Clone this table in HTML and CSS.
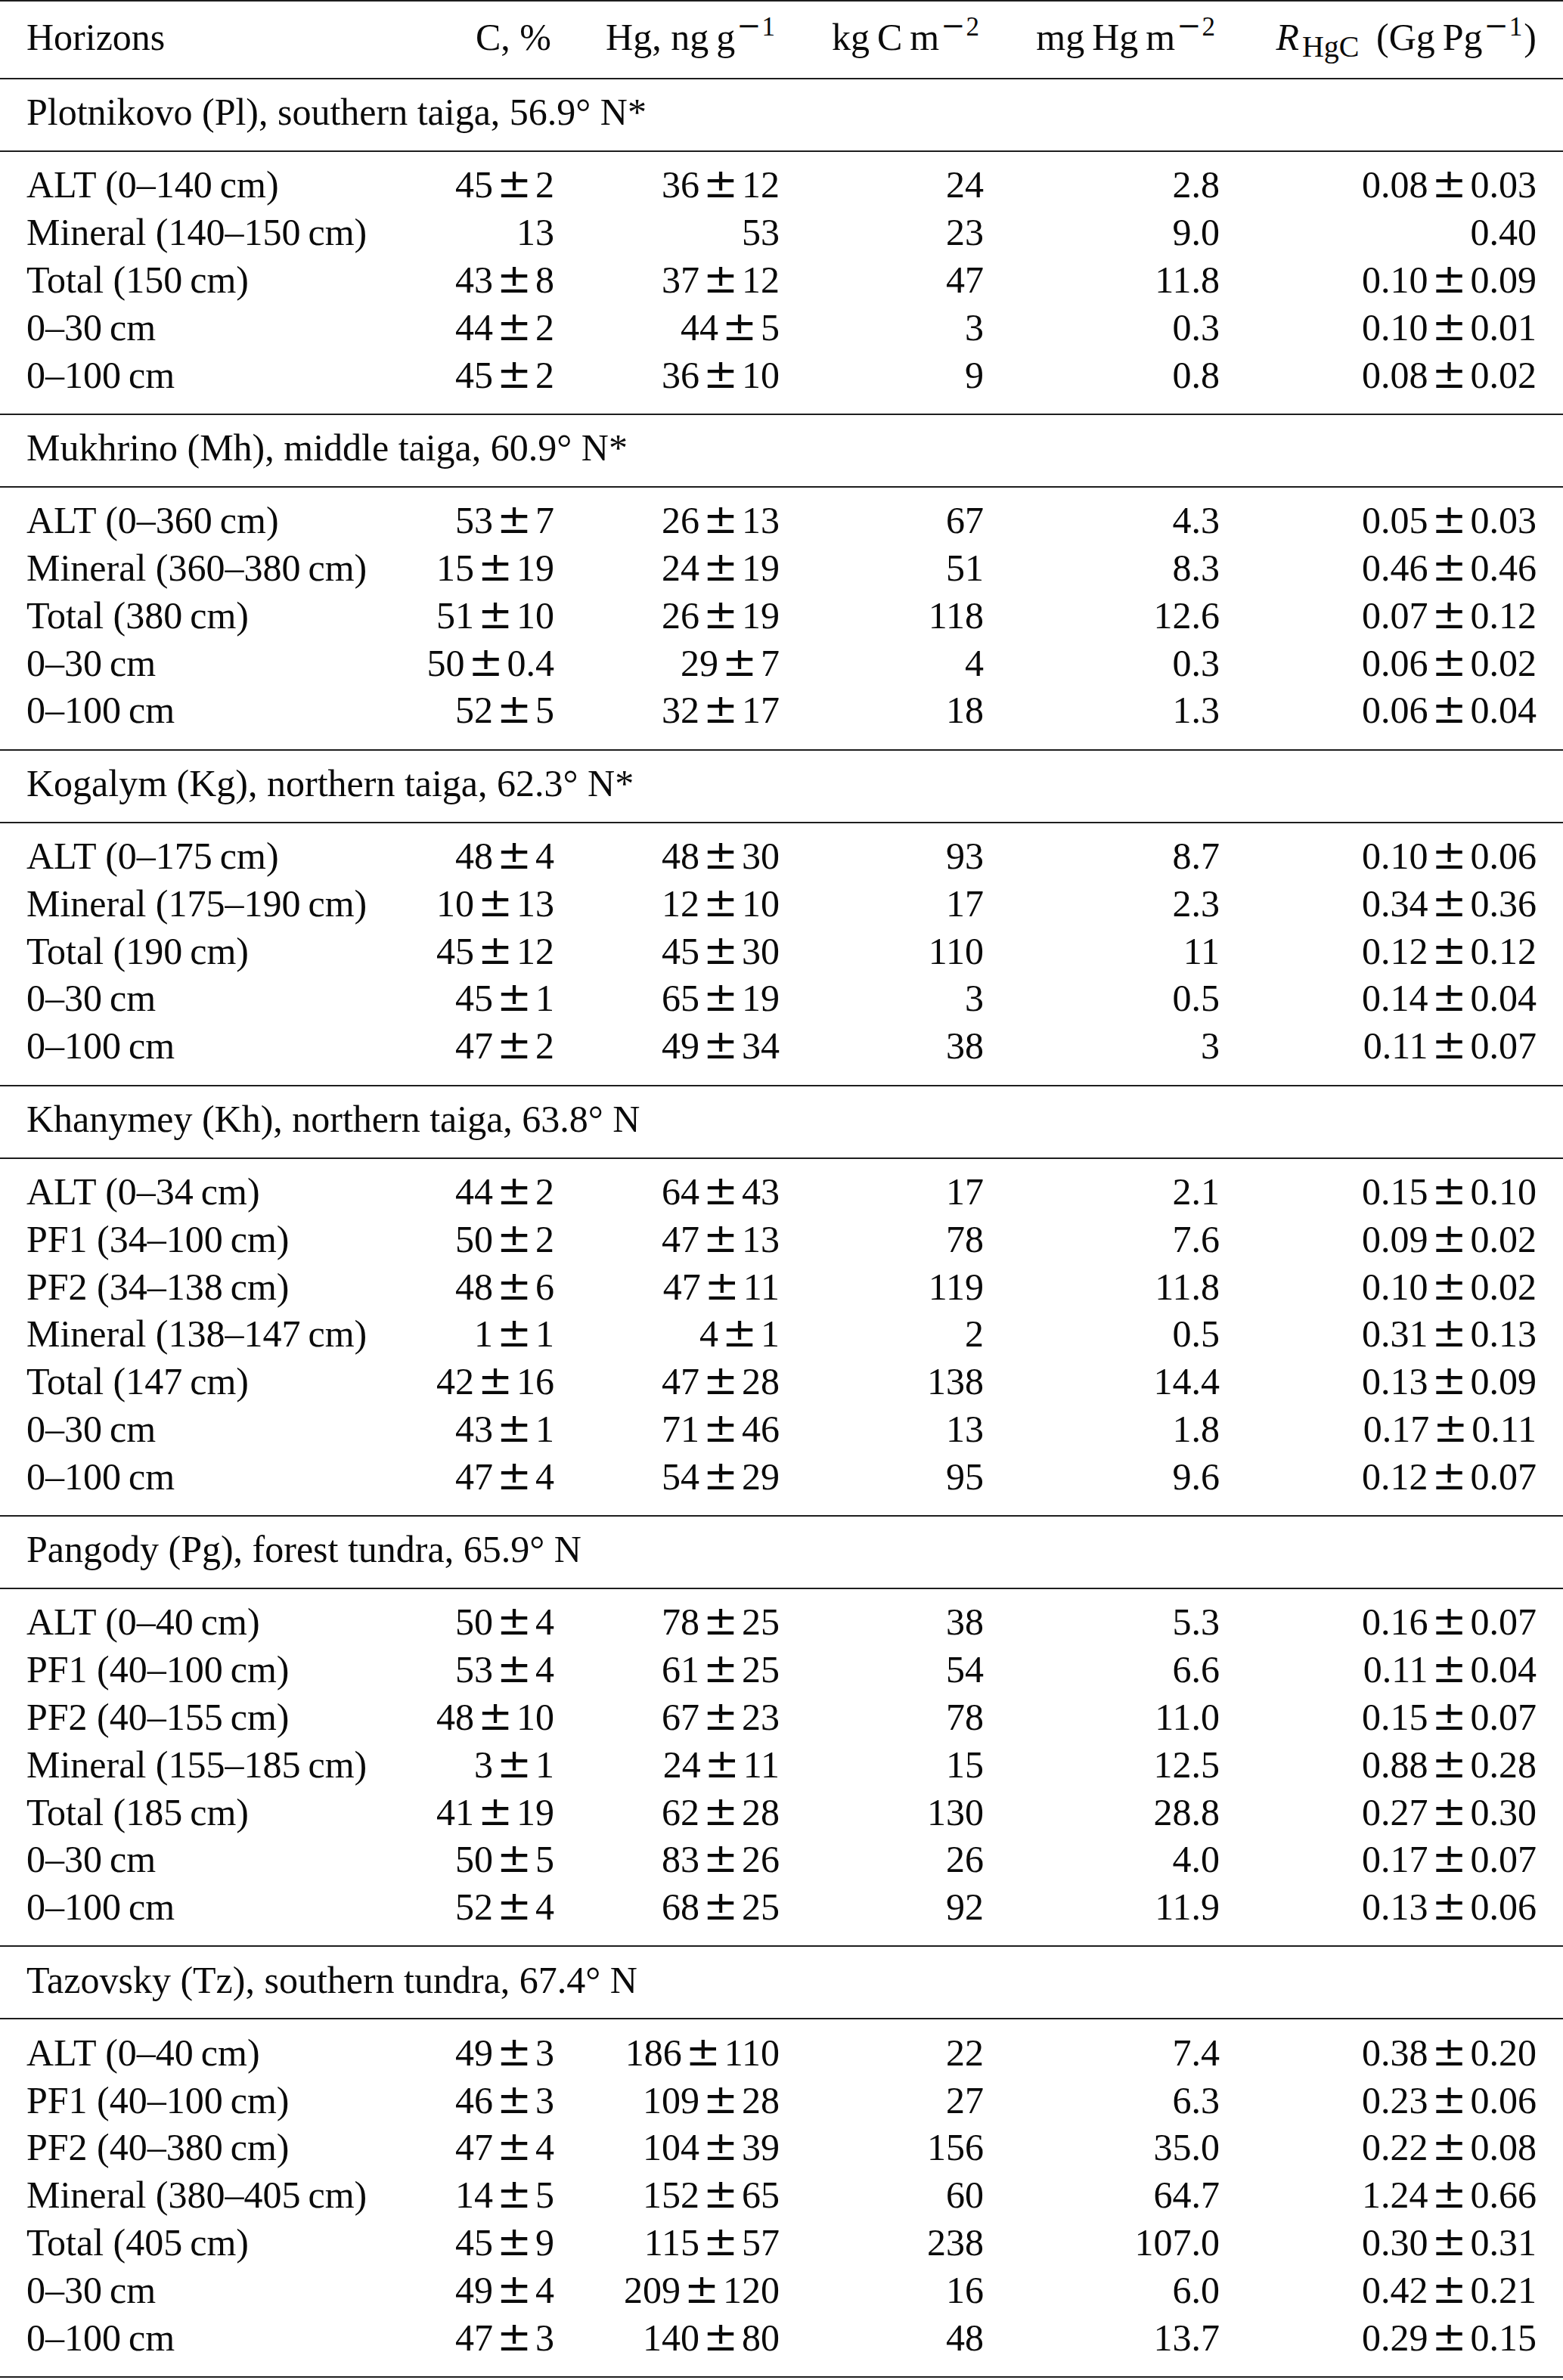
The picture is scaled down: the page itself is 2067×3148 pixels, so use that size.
FILE: index.html
```html
<!DOCTYPE html>
<html lang="en">
<head>
<meta charset="utf-8">
<title>Carbon and mercury stocks by horizon</title>
<link rel="stylesheet" href="styles.css">
</head>
<body>
<div class="table">
  <div class="cols head">
    <span class="l">Horizons</span>
    <span>C, %</span>
    <span>Hg, ng&#8201;g<sup><span class="mn">−</span>1</sup></span>
    <span>kg&#8201;C&#8201;m<sup><span class="mn">−</span>2</sup></span>
    <span>mg&#8201;Hg&#8201;m<sup><span class="mn">−</span>2</sup></span>
    <span><i>R</i><sub>HgC</sub> (Gg&#8201;Pg<sup><span class="mn">−</span>1</sup>)</span>
  </div>

  <div class="site">Plotnikovo (Pl), southern taiga, 56.9° N*</div>
  <div class="cols group">
    <span class="l">ALT (0–140&#8201;cm)</span><span>45<b class="pm">±</b>2</span><span>36<b class="pm">±</b>12</span><span>24</span><span>2.8</span><span>0.08<b class="pm">±</b>0.03</span>
    <span class="l">Mineral (140–150&#8201;cm)</span><span>13</span><span>53</span><span>23</span><span>9.0</span><span>0.40</span>
    <span class="l">Total (150&#8201;cm)</span><span>43<b class="pm">±</b>8</span><span>37<b class="pm">±</b>12</span><span>47</span><span>11.8</span><span>0.10<b class="pm">±</b>0.09</span>
    <span class="l">0–30&#8201;cm</span><span>44<b class="pm">±</b>2</span><span>44<b class="pm">±</b>5</span><span>3</span><span>0.3</span><span>0.10<b class="pm">±</b>0.01</span>
    <span class="l">0–100&#8201;cm</span><span>45<b class="pm">±</b>2</span><span>36<b class="pm">±</b>10</span><span>9</span><span>0.8</span><span>0.08<b class="pm">±</b>0.02</span>
  </div>

  <div class="site">Mukhrino (Mh), middle taiga, 60.9° N*</div>
  <div class="cols group">
    <span class="l">ALT (0–360&#8201;cm)</span><span>53<b class="pm">±</b>7</span><span>26<b class="pm">±</b>13</span><span>67</span><span>4.3</span><span>0.05<b class="pm">±</b>0.03</span>
    <span class="l">Mineral (360–380&#8201;cm)</span><span>15<b class="pm">±</b>19</span><span>24<b class="pm">±</b>19</span><span>51</span><span>8.3</span><span>0.46<b class="pm">±</b>0.46</span>
    <span class="l">Total (380&#8201;cm)</span><span>51<b class="pm">±</b>10</span><span>26<b class="pm">±</b>19</span><span>118</span><span>12.6</span><span>0.07<b class="pm">±</b>0.12</span>
    <span class="l">0–30&#8201;cm</span><span>50<b class="pm">±</b>0.4</span><span>29<b class="pm">±</b>7</span><span>4</span><span>0.3</span><span>0.06<b class="pm">±</b>0.02</span>
    <span class="l">0–100&#8201;cm</span><span>52<b class="pm">±</b>5</span><span>32<b class="pm">±</b>17</span><span>18</span><span>1.3</span><span>0.06<b class="pm">±</b>0.04</span>
  </div>

  <div class="site">Kogalym (Kg), northern taiga, 62.3° N*</div>
  <div class="cols group">
    <span class="l">ALT (0–175&#8201;cm)</span><span>48<b class="pm">±</b>4</span><span>48<b class="pm">±</b>30</span><span>93</span><span>8.7</span><span>0.10<b class="pm">±</b>0.06</span>
    <span class="l">Mineral (175–190&#8201;cm)</span><span>10<b class="pm">±</b>13</span><span>12<b class="pm">±</b>10</span><span>17</span><span>2.3</span><span>0.34<b class="pm">±</b>0.36</span>
    <span class="l">Total (190&#8201;cm)</span><span>45<b class="pm">±</b>12</span><span>45<b class="pm">±</b>30</span><span>110</span><span>11</span><span>0.12<b class="pm">±</b>0.12</span>
    <span class="l">0–30&#8201;cm</span><span>45<b class="pm">±</b>1</span><span>65<b class="pm">±</b>19</span><span>3</span><span>0.5</span><span>0.14<b class="pm">±</b>0.04</span>
    <span class="l">0–100&#8201;cm</span><span>47<b class="pm">±</b>2</span><span>49<b class="pm">±</b>34</span><span>38</span><span>3</span><span>0.11<b class="pm">±</b>0.07</span>
  </div>

  <div class="site">Khanymey (Kh), northern taiga, 63.8° N</div>
  <div class="cols group">
    <span class="l">ALT (0–34&#8201;cm)</span><span>44<b class="pm">±</b>2</span><span>64<b class="pm">±</b>43</span><span>17</span><span>2.1</span><span>0.15<b class="pm">±</b>0.10</span>
    <span class="l">PF1 (34–100&#8201;cm)</span><span>50<b class="pm">±</b>2</span><span>47<b class="pm">±</b>13</span><span>78</span><span>7.6</span><span>0.09<b class="pm">±</b>0.02</span>
    <span class="l">PF2 (34–138&#8201;cm)</span><span>48<b class="pm">±</b>6</span><span>47<b class="pm">±</b>11</span><span>119</span><span>11.8</span><span>0.10<b class="pm">±</b>0.02</span>
    <span class="l">Mineral (138–147&#8201;cm)</span><span>1<b class="pm">±</b>1</span><span>4<b class="pm">±</b>1</span><span>2</span><span>0.5</span><span>0.31<b class="pm">±</b>0.13</span>
    <span class="l">Total (147&#8201;cm)</span><span>42<b class="pm">±</b>16</span><span>47<b class="pm">±</b>28</span><span>138</span><span>14.4</span><span>0.13<b class="pm">±</b>0.09</span>
    <span class="l">0–30&#8201;cm</span><span>43<b class="pm">±</b>1</span><span>71<b class="pm">±</b>46</span><span>13</span><span>1.8</span><span>0.17<b class="pm">±</b>0.11</span>
    <span class="l">0–100&#8201;cm</span><span>47<b class="pm">±</b>4</span><span>54<b class="pm">±</b>29</span><span>95</span><span>9.6</span><span>0.12<b class="pm">±</b>0.07</span>
  </div>

  <div class="site">Pangody (Pg), forest tundra, 65.9° N</div>
  <div class="cols group">
    <span class="l">ALT (0–40&#8201;cm)</span><span>50<b class="pm">±</b>4</span><span>78<b class="pm">±</b>25</span><span>38</span><span>5.3</span><span>0.16<b class="pm">±</b>0.07</span>
    <span class="l">PF1 (40–100&#8201;cm)</span><span>53<b class="pm">±</b>4</span><span>61<b class="pm">±</b>25</span><span>54</span><span>6.6</span><span>0.11<b class="pm">±</b>0.04</span>
    <span class="l">PF2 (40–155&#8201;cm)</span><span>48<b class="pm">±</b>10</span><span>67<b class="pm">±</b>23</span><span>78</span><span>11.0</span><span>0.15<b class="pm">±</b>0.07</span>
    <span class="l">Mineral (155–185&#8201;cm)</span><span>3<b class="pm">±</b>1</span><span>24<b class="pm">±</b>11</span><span>15</span><span>12.5</span><span>0.88<b class="pm">±</b>0.28</span>
    <span class="l">Total (185&#8201;cm)</span><span>41<b class="pm">±</b>19</span><span>62<b class="pm">±</b>28</span><span>130</span><span>28.8</span><span>0.27<b class="pm">±</b>0.30</span>
    <span class="l">0–30&#8201;cm</span><span>50<b class="pm">±</b>5</span><span>83<b class="pm">±</b>26</span><span>26</span><span>4.0</span><span>0.17<b class="pm">±</b>0.07</span>
    <span class="l">0–100&#8201;cm</span><span>52<b class="pm">±</b>4</span><span>68<b class="pm">±</b>25</span><span>92</span><span>11.9</span><span>0.13<b class="pm">±</b>0.06</span>
  </div>

  <div class="site">Tazovsky (Tz), southern tundra, 67.4° N</div>
  <div class="cols group">
    <span class="l">ALT (0–40&#8201;cm)</span><span>49<b class="pm">±</b>3</span><span>186<b class="pm">±</b>110</span><span>22</span><span>7.4</span><span>0.38<b class="pm">±</b>0.20</span>
    <span class="l">PF1 (40–100&#8201;cm)</span><span>46<b class="pm">±</b>3</span><span>109<b class="pm">±</b>28</span><span>27</span><span>6.3</span><span>0.23<b class="pm">±</b>0.06</span>
    <span class="l">PF2 (40–380&#8201;cm)</span><span>47<b class="pm">±</b>4</span><span>104<b class="pm">±</b>39</span><span>156</span><span>35.0</span><span>0.22<b class="pm">±</b>0.08</span>
    <span class="l">Mineral (380–405&#8201;cm)</span><span>14<b class="pm">±</b>5</span><span>152<b class="pm">±</b>65</span><span>60</span><span>64.7</span><span>1.24<b class="pm">±</b>0.66</span>
    <span class="l">Total (405&#8201;cm)</span><span>45<b class="pm">±</b>9</span><span>115<b class="pm">±</b>57</span><span>238</span><span>107.0</span><span>0.30<b class="pm">±</b>0.31</span>
    <span class="l">0–30&#8201;cm</span><span>49<b class="pm">±</b>4</span><span>209<b class="pm">±</b>120</span><span>16</span><span>6.0</span><span>0.42<b class="pm">±</b>0.21</span>
    <span class="l">0–100&#8201;cm</span><span>47<b class="pm">±</b>3</span><span>140<b class="pm">±</b>80</span><span>48</span><span>13.7</span><span>0.29<b class="pm">±</b>0.15</span>
  </div>
</div>
</body>
</html>
```
FILE: styles.css
```css
html, body {
  margin: 0;
  padding: 0;
  background: #ffffff;
}

body {
  color: #0a0a0a;
  font-family: "Liberation Serif", "Times New Roman", serif;
  font-size: 50px;
}

.table {
  width: 2067px;
  border-top: 2px solid #1e1e1e;
}

.cols {
  display: grid;
  grid-template-columns: 465px 233px 298px 270px 312px 419px;
  padding: 0 35px;
  line-height: 62.8px;
  white-space: nowrap;
}

.cols > span {
  text-align: right;
}

.cols > .l {
  text-align: left;
}

.head {
  padding-top: 16.4px;
  padding-bottom: 21.8px;
  border-bottom: 2px solid #1e1e1e;
}

.head > span:not(.l):not(:last-child) {
  padding-right: 4px;
}

.site {
  padding: 12.4px 35px 18.8px;
  line-height: 62.8px;
  white-space: nowrap;
  border-bottom: 2px solid #1e1e1e;
}

.group {
  padding-top: 12.4px;
  padding-bottom: 19.5px;
  border-bottom: 2px solid #1e1e1e;
}

.pm {
  font-family: "DejaVu Serif", "Liberation Serif", serif;
  font-weight: normal;
  font-size: 1.1em;
  line-height: 0;
  margin: 0 5px;
}

sup {
  font-size: 0.7em;
  line-height: 0;
  vertical-align: 19px;
  margin-left: 2px;
  margin-right: 2px;
}

.mn {
  font-family: "DejaVu Serif", "Liberation Serif", serif;
  font-size: 1.1em;
  margin-right: 1px;
}

sub {
  font-size: 0.8em;
  line-height: 0;
  vertical-align: -9px;
  margin-left: 4px;
  margin-right: 10px;
}

i {
  font-style: italic;
}
```
